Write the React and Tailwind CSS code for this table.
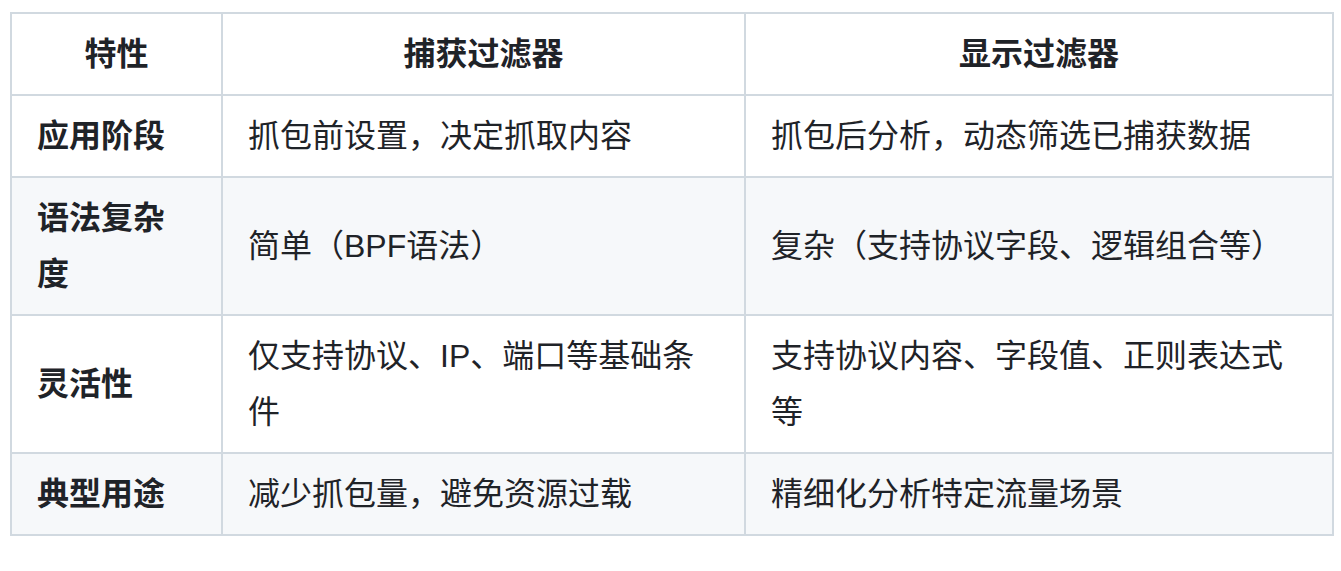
import React from "react";

const rows = [
  ["应用阶段", "抓包前设置，决定抓取内容", "抓包后分析，动态筛选已捕获数据"],
  ["语法复杂度", "简单（BPF语法）", "复杂（支持协议字段、逻辑组合等）"],
  ["灵活性", "仅支持协议、IP、端口等基础条件", "支持协议内容、字段值、正则表达式等"],
  ["典型用途", "减少抓包量，避免资源过载", "精细化分析特定流量场景"],
];

export default function App() {
  return (
    <div
      className="bg-white w-[1341px] h-[571px] pt-[12px] pl-[10px] text-[#1f2328] text-[32px] leading-[56px]"
      style={{ fontFamily: '"Liberation Sans", "Noto Sans CJK SC", sans-serif' }}
    >
      <table className="border-collapse w-[1322px] table-fixed">
        <colgroup>
          <col className="w-[211px]" />
          <col className="w-[523px]" />
          <col className="w-[588px]" />
        </colgroup>
        <thead>
          <tr className="bg-white">
            <th className="border-2 border-[#d1d9e0] px-[25px] py-[12px] font-bold text-center">特性</th>
            <th className="border-2 border-[#d1d9e0] px-[25px] py-[12px] font-bold text-center">捕获过滤器</th>
            <th className="border-2 border-[#d1d9e0] px-[25px] py-[12px] font-bold text-center">显示过滤器</th>
          </tr>
        </thead>
        <tbody>
          {rows.map((r, i) => (
            <tr key={i} className={i % 2 === 1 ? "bg-[#f6f8fa]" : "bg-white"}>
              <td className="border-2 border-[#d1d9e0] px-[25px] py-[12px] font-bold">{r[0]}</td>
              <td className="border-2 border-[#d1d9e0] px-[25px] py-[12px]">{r[1]}</td>
              <td className="border-2 border-[#d1d9e0] px-[25px] py-[12px]">{r[2]}</td>
            </tr>
          ))}
        </tbody>
      </table>
    </div>
  );
}
